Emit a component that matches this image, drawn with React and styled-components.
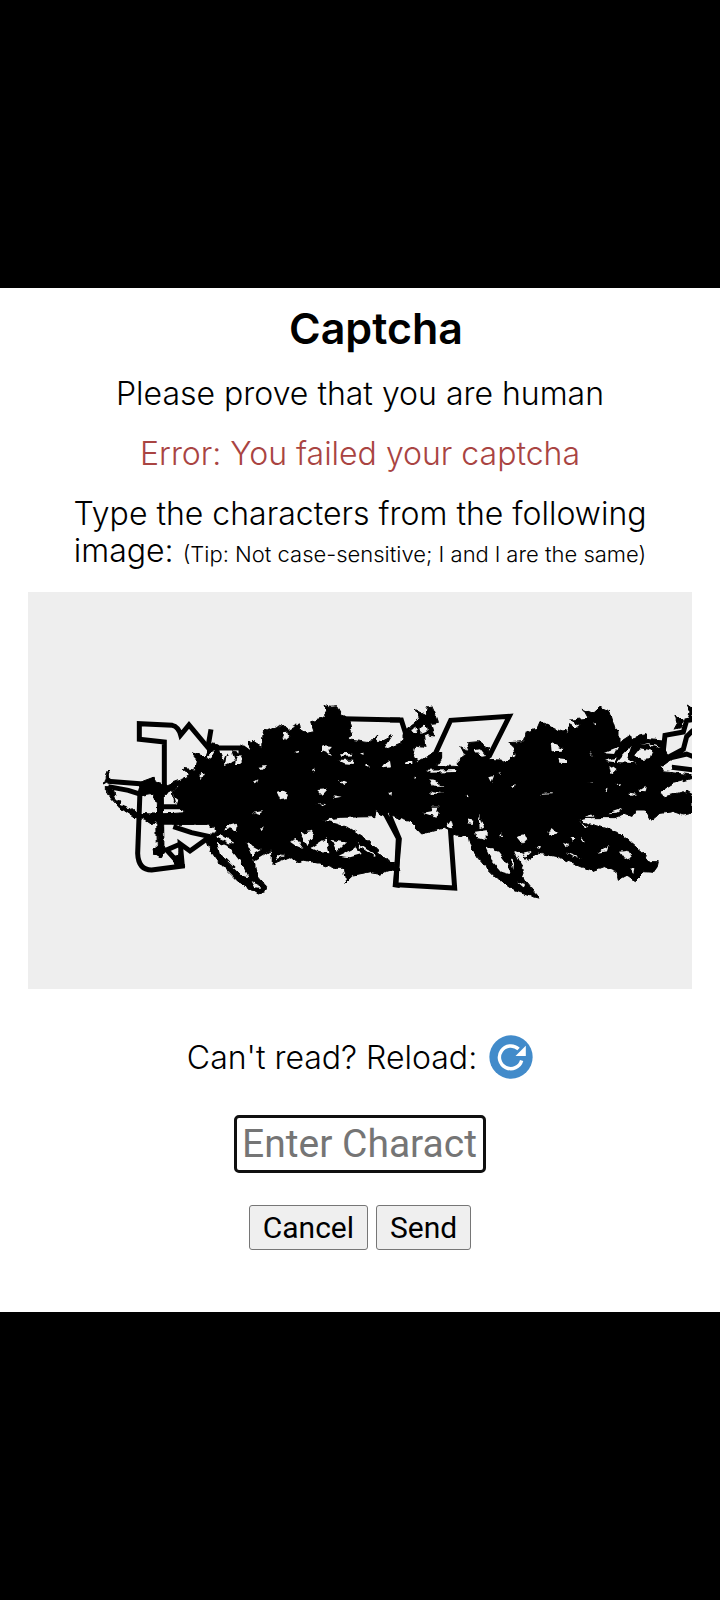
import React, { useState } from "react";
import { createGlobalStyle, styled } from "styled-components";

const GlobalStyle = createGlobalStyle`
  * {
    box-sizing: border-box;
  }

  body {
    margin: 0;
    background-color: black;
    color: black;
    font-family: Inter, "Open Sans", sans-serif;
    font-size: 32px;
    font-weight: 300;
    line-height: 37px;
  }
`;

const Page = styled.main`
  min-height: 100vh;
  display: flex;
  flex-direction: column;
  justify-content: center;
`;

const Panel = styled.form`
  display: flex;
  flex-direction: column;
  align-items: center;
  padding: 16px 28px 62px 28px;
  background-color: white;
  text-align: center;
`;

const Title = styled.h1`
  margin: 0 0 23px 0;
  padding-left: 32px;
  font-size: 43px;
  font-weight: 600;
  line-height: 48px;
`;

const Text = styled.p`
  margin: 0 0 23px 0;
  color: ${(props) => (props.$error ? "#a94442" : "black")};
`;

const Tip = styled.small`
  font-size: 22px;
  line-height: 1;
`;

const Captcha = styled.svg`
  display: block;
  width: 100%;
  margin-bottom: 46px;
  background-color: #eeeeee;
`;

const ReloadLine = styled.div`
  display: flex;
  align-items: center;
  gap: 12px;
  margin-bottom: 36px;
`;

const ReloadButton = styled.button`
  width: 44px;
  height: 44px;
  padding: 0;
  border: none;
  background: none;
  cursor: pointer;

  svg {
    display: block;
    width: 100%;
  }
`;

const Answer = styled.input`
  width: 252px;
  height: 58px;
  margin-bottom: 32px;
  padding: 0 5px;
  border: 3px solid #101010;
  border-radius: 5px;
  outline: none;
  background-color: white;
  font-family: Roboto, sans-serif;
  font-size: 39px;
  font-weight: 400;

  &::placeholder {
    color: #757575;
    opacity: 1;
  }
`;

const Buttons = styled.div`
  display: flex;
  gap: 8px;
`;

const Button = styled.button`
  height: 45px;
  padding: 0 13px;
  border: 1px solid #767676;
  border-radius: 3px;
  background-color: #efefef;
  color: black;
  font-family: Roboto, sans-serif;
  font-size: 30px;
  font-weight: 400;
`;

// the drawing is made of four parts, each one starts at its own x
const parts = [
  {
    x: 67,
    lines: [
      "M208 290V156L133 148V101L232 106Q250 110 257 135L282 105L345 180",
      "M348 118L340 165M360 174L445 174L480 200",
      "M150 285Q134 290 134 330L128 490Q130 540 170 540L262 528L256 462L285 483L345 440",
      "M256 525L215 480L256 462M205 350H270M200 397H380M235 410L290 428L345 440",
      "M38 274L145 282M40 290L100 301L140 314",
    ],
    mass: [
      "M300 190L330 200L345 160L370 165L372 180L385 215L395 190L410 200L412 185L445 195L470 180L462 150L480 160V600L430 575L400 545L370 515L345 480L335 450L365 420L340 403H240V370L270 368L250 345L235 332L232 305L250 290L240 280L270 265L285 255L262 235L285 238L300 240L305 205L293 190Z",
      "M40 240L46 272L28 282Z",
      "M34 288L55 300L62 325L85 345L110 358L125 370L180 372L240 370L240 402L180 396L170 405L140 385L115 382L75 355L48 325L34 300Z",
      "M135 290L140 275L175 262L178 275L215 285L268 265L235 300L205 318L207 485L200 503L178 490L174 478L187 470L184 340L175 310L145 315Z",
      "M256 465L266 528L240 525L232 500L250 495Z",
    ],
    holes: [
      "M365 455L400 470L440 520L460 562L440 555L400 515L375 490Z",
      "M235 305L240 322L250 330L245 345Z",
      "M395 405L415 400L428 410L425 425L405 415L388 422Z",
      "M335 200L358 180L360 192L340 207Z",
      "M395 195L412 190L420 212L390 225Z",
      "M425 198L440 200L440 222L420 222Z",
      "M318 250L330 248L315 275Z",
      "M72 328L85 342L105 352L100 354L78 345Z",
      "M360 440L380 435L420 460L400 460Z",
    ],
  },
  {
    x: 212,
    lines: ["M310 86L480 90", "M435 370L475 445L468 585L480 587"],
    mass: [
      "M0 165L20 175L40 190L28 150L65 172L70 125L95 118L125 106L145 120L165 110L178 98L182 120L200 130L222 125L212 95L245 88L262 62L252 43L270 52L290 50L305 75L325 85L334 120L328 150L390 158L410 135L410 160L457 135L430 180L480 160V380L450 370L430 376L408 362L405 380L300 382L245 390L290 400L330 415L375 445L410 480L440 510L460 520L480 545L455 540L420 550L390 545L340 555L317 577L310 535L280 535L240 520L190 510L172 518L150 500L95 523V480L60 500L40 520L55 560L80 590L75 605L55 612L20 590L0 575Z",
    ],
    holes: [
      "M20 458L62 480L45 490L38 502Z",
      "M40 512L80 488L95 495L95 520L60 540Z",
      "M110 305L128 302L145 312L140 325L120 328Z",
      "M125 130L145 128L148 138L135 150Z",
      "M245 165L275 168L265 180L276 195L243 182Z",
      "M300 190L340 188L338 196L305 198Z",
      "M296 212L340 212L338 222L310 220Z",
      "M425 228L450 212L453 232L430 235Z",
      "M215 240L226 233L226 248Z",
      "M295 270L320 280L310 285Z",
      "M232 300L260 298L245 314Z",
      "M278 316L305 320L285 324Z",
      "M58 230L78 228L68 240Z",
      "M42 275L55 268L50 282Z",
      "M38 368L65 364L62 376Z",
      "M230 340L256 343L245 348Z",
      "M360 190L372 188L368 194Z",
      "M448 308L456 306L454 318Z",
      "M60 412L74 412L66 422Z",
      "M150 455L170 447L190 476L165 466Z",
      "M180 430L215 422L225 435L200 465Z",
      "M212 475L258 445L268 490L235 485Z",
      "M275 450L320 458L290 485Z",
      "M296 497L350 472L365 492L330 502Z",
      "M108 495L132 498L112 508Z",
      "M35 574L52 580L60 594L45 592Z",
      "M350 455L405 495L400 497L360 470Z",
      "M165 185L178 182L175 192Z",
      "M375 222L385 222L385 232Z",
    ],
  },
  {
    x: 362,
    lines: [
      "M0 90H34L50 140",
      "M132 200L182 91L358 79L297 200",
      "M0 380L28 447L16 584L194 594L181 415",
    ],
    mass: [
      "M0 175L35 160L42 125L75 100L88 82L75 58L108 75L112 50L125 48L135 70L145 98L122 100L132 138L100 130L105 172L75 168L70 190L82 218L130 190L155 188L155 205L140 226L205 230L205 210L225 195L212 170L240 185L232 158L265 155L295 175L298 208L330 210L345 218L375 195L370 170L355 158L400 155L410 125L440 118L450 95L480 110V495L450 485L410 512L398 490L370 480L390 520L403 540L395 560L420 590L450 625L410 615L370 600L320 565L290 535L265 505L240 465L235 440L200 435L160 415L95 432L60 395L0 375Z",
    ],
    holes: [
      "M285 470L325 485L355 525L358 552L335 545L305 512Z",
      "M118 268L135 270L160 290L130 290Z",
      "M122 350L145 350L140 380L100 368L125 364Z",
      "M165 410L180 388L187 415Z",
      "M255 425L290 420L290 448L258 440Z",
      "M268 370L282 410L272 415Z",
      "M235 388L250 392L248 402L235 400Z",
      "M253 178L270 175L288 198L275 200Z",
      "M298 262L312 258L305 275Z",
      "M362 288L374 282L372 294Z",
      "M224 320L235 310L235 322Z",
      "M382 440L405 435L412 450L400 462Z",
      "M398 488L425 482L408 500Z",
      "M382 575L405 582L400 592Z",
      "M62 118L75 112L82 125L70 130Z",
      "M86 118L106 104L110 122L95 128Z",
      "M108 242L200 240L195 246L120 248Z",
      "M50 215L70 215L70 225L48 225Z",
      "M330 245L336 258L326 252Z",
      "M70 260L78 262L74 270Z",
      "M120 312L130 304L160 310Z",
      "M330 430L340 440L332 442Z",
      "M362 505L372 515L370 540Z",
      "M440 470L450 472L446 480Z",
    ],
  },
  {
    x: 512,
    lines: [
      "M370 182L375 136L430 126L440 92L460 88",
      "M385 202L430 178L440 140L460 120M385 205L440 192L460 200",
      "M395 232L460 240",
    ],
    mass: [
      "M0 95L55 122L75 118L82 130L90 105L108 115L120 105L92 90L145 85L130 58L160 70L180 52L210 65L225 115L237 120V158L272 135L275 150L290 140L318 133L320 145L365 150L375 180L395 210L365 232L370 245L456 255V265L400 280L360 305L375 320L430 305L456 322V370L430 375L400 365L360 370L333 392L315 360L285 360L278 378L255 370L225 383H160L115 390L140 400L180 410L240 430L275 460L310 490L330 515L355 515L352 530L340 547L310 545L283 572L260 555L235 568L230 545L190 530L155 543L100 520L50 500L0 490Z",
      "M405 75L415 88L430 90L425 112L402 118L412 100Z",
      "M442 45L456 55V90L446 80L450 62Z",
      "M440 300L456 310V330L432 325Z",
    ],
    holes: [
      "M32 158L70 175L65 182L35 184Z",
      "M55 205L82 208L80 220L58 218Z",
      "M280 200L300 175L337 182L328 208L305 210Z",
      "M230 216L275 165L262 205L290 220Z",
      "M190 190L235 172L225 192Z",
      "M192 212L232 202L220 216Z",
      "M208 225L230 240L215 254Z",
      "M362 230L392 226L398 240L372 242Z",
      "M298 302L320 287L317 304Z",
      "M268 308L292 312L275 318Z",
      "M205 370L250 355L230 368Z",
      "M22 425L38 418L52 430L28 436Z",
      "M92 438L108 448L98 455Z",
      "M122 440L134 452L126 455Z",
      "M72 458L88 465L80 472Z",
      "M172 488L205 468L200 484Z",
      "M240 485L262 482L275 500L255 507Z",
      "M268 535L283 538L280 552Z",
      "M75 486L125 505L100 500Z",
      "M138 380L152 372L160 380Z",
      "M190 298L200 293L198 304Z",
      "M140 280L165 276L150 282Z",
      "M300 158L365 170L350 172Z",
      "M230 280L238 276L238 285Z",
      "M118 397L145 410L138 413Z",
      "M148 185L160 202L150 192Z",
      "M160 98L170 96L166 106Z",
      "M5 312L35 310L35 313L5 314Z",
    ],
  },
];

function CaptchaImage() {
  return (
    <Captcha viewBox="0 0 664 397" role="img" aria-label="Captcha">
      <defs>
        <filter
          id="rough"
          x="0"
          y="0"
          width="664"
          height="397"
          filterUnits="userSpaceOnUse"
          colorInterpolationFilters="sRGB"
        >
          <feTurbulence type="fractalNoise" baseFrequency="0.2" numOctaves="1" seed="4" />
          <feDisplacementMap in="SourceGraphic" scale="6" xChannelSelector="R" yChannelSelector="G" />
        </filter>
      </defs>
      {parts.map((part) => (
        <g
          key={part.x}
          transform={`translate(${part.x} 98) scale(0.3333)`}
          fill="none"
          stroke="black"
          strokeWidth="15"
          strokeMiterlimit="8"
        >
          {part.lines.map((d) => (
            <path d={d} key={d} />
          ))}
        </g>
      ))}
      <g filter="url(#rough)">
        {parts.map((part) => (
          <g
            key={part.x}
            transform={`translate(${part.x} 98) scale(0.3333)`}
            stroke="black"
            strokeWidth="3"
            strokeMiterlimit="8"
          >
            {part.mass.map((d) => (
              <path d={d} key={d} />
            ))}
          </g>
        ))}
        {parts.map((part) => (
          <g key={part.x} transform={`translate(${part.x} 98) scale(0.3333)`} fill="#eeeeee">
            {part.holes.map((d) => (
              <path d={d} key={d} />
            ))}
          </g>
        ))}
      </g>
    </Captcha>
  );
}

export default function App() {
  const [answer, setAnswer] = useState("");
  return (
    <>
      <GlobalStyle />
      <Page>
        <Panel onSubmit={(e) => e.preventDefault()}>
          <Title>Captcha</Title>
          <Text>Please prove that you are human</Text>
          <Text $error>Error: You failed your captcha</Text>
          <Text>
            Type the characters from the following image: <Tip>(Tip: Not case-sensitive; I and l are the same)</Tip>
          </Text>
          <CaptchaImage />
          {/* reload */}
          <ReloadLine>
            <span id="reload">Can't read? Reload:</span>
            <ReloadButton type="button" aria-labelledby="reload">
              <svg viewBox="0 0 128 128">
                <circle cx="64" cy="64" r="63" fill="#428bca" />
                <path d="M86 41A33 33 0 1 0 95 74" fill="none" stroke="white" strokeWidth="10" />
                <path d="M107 31V61H77Z" fill="white" />
              </svg>
            </ReloadButton>
          </ReloadLine>
          <Answer
            type="text"
            aria-label="Enter Characters"
            placeholder="Enter Characters"
            value={answer}
            onChange={(e) => setAnswer(e.target.value)}
          />
          <Buttons>
            <Button type="button">Cancel</Button>
            <Button type="submit">Send</Button>
          </Buttons>
        </Panel>
      </Page>
    </>
  );
}
